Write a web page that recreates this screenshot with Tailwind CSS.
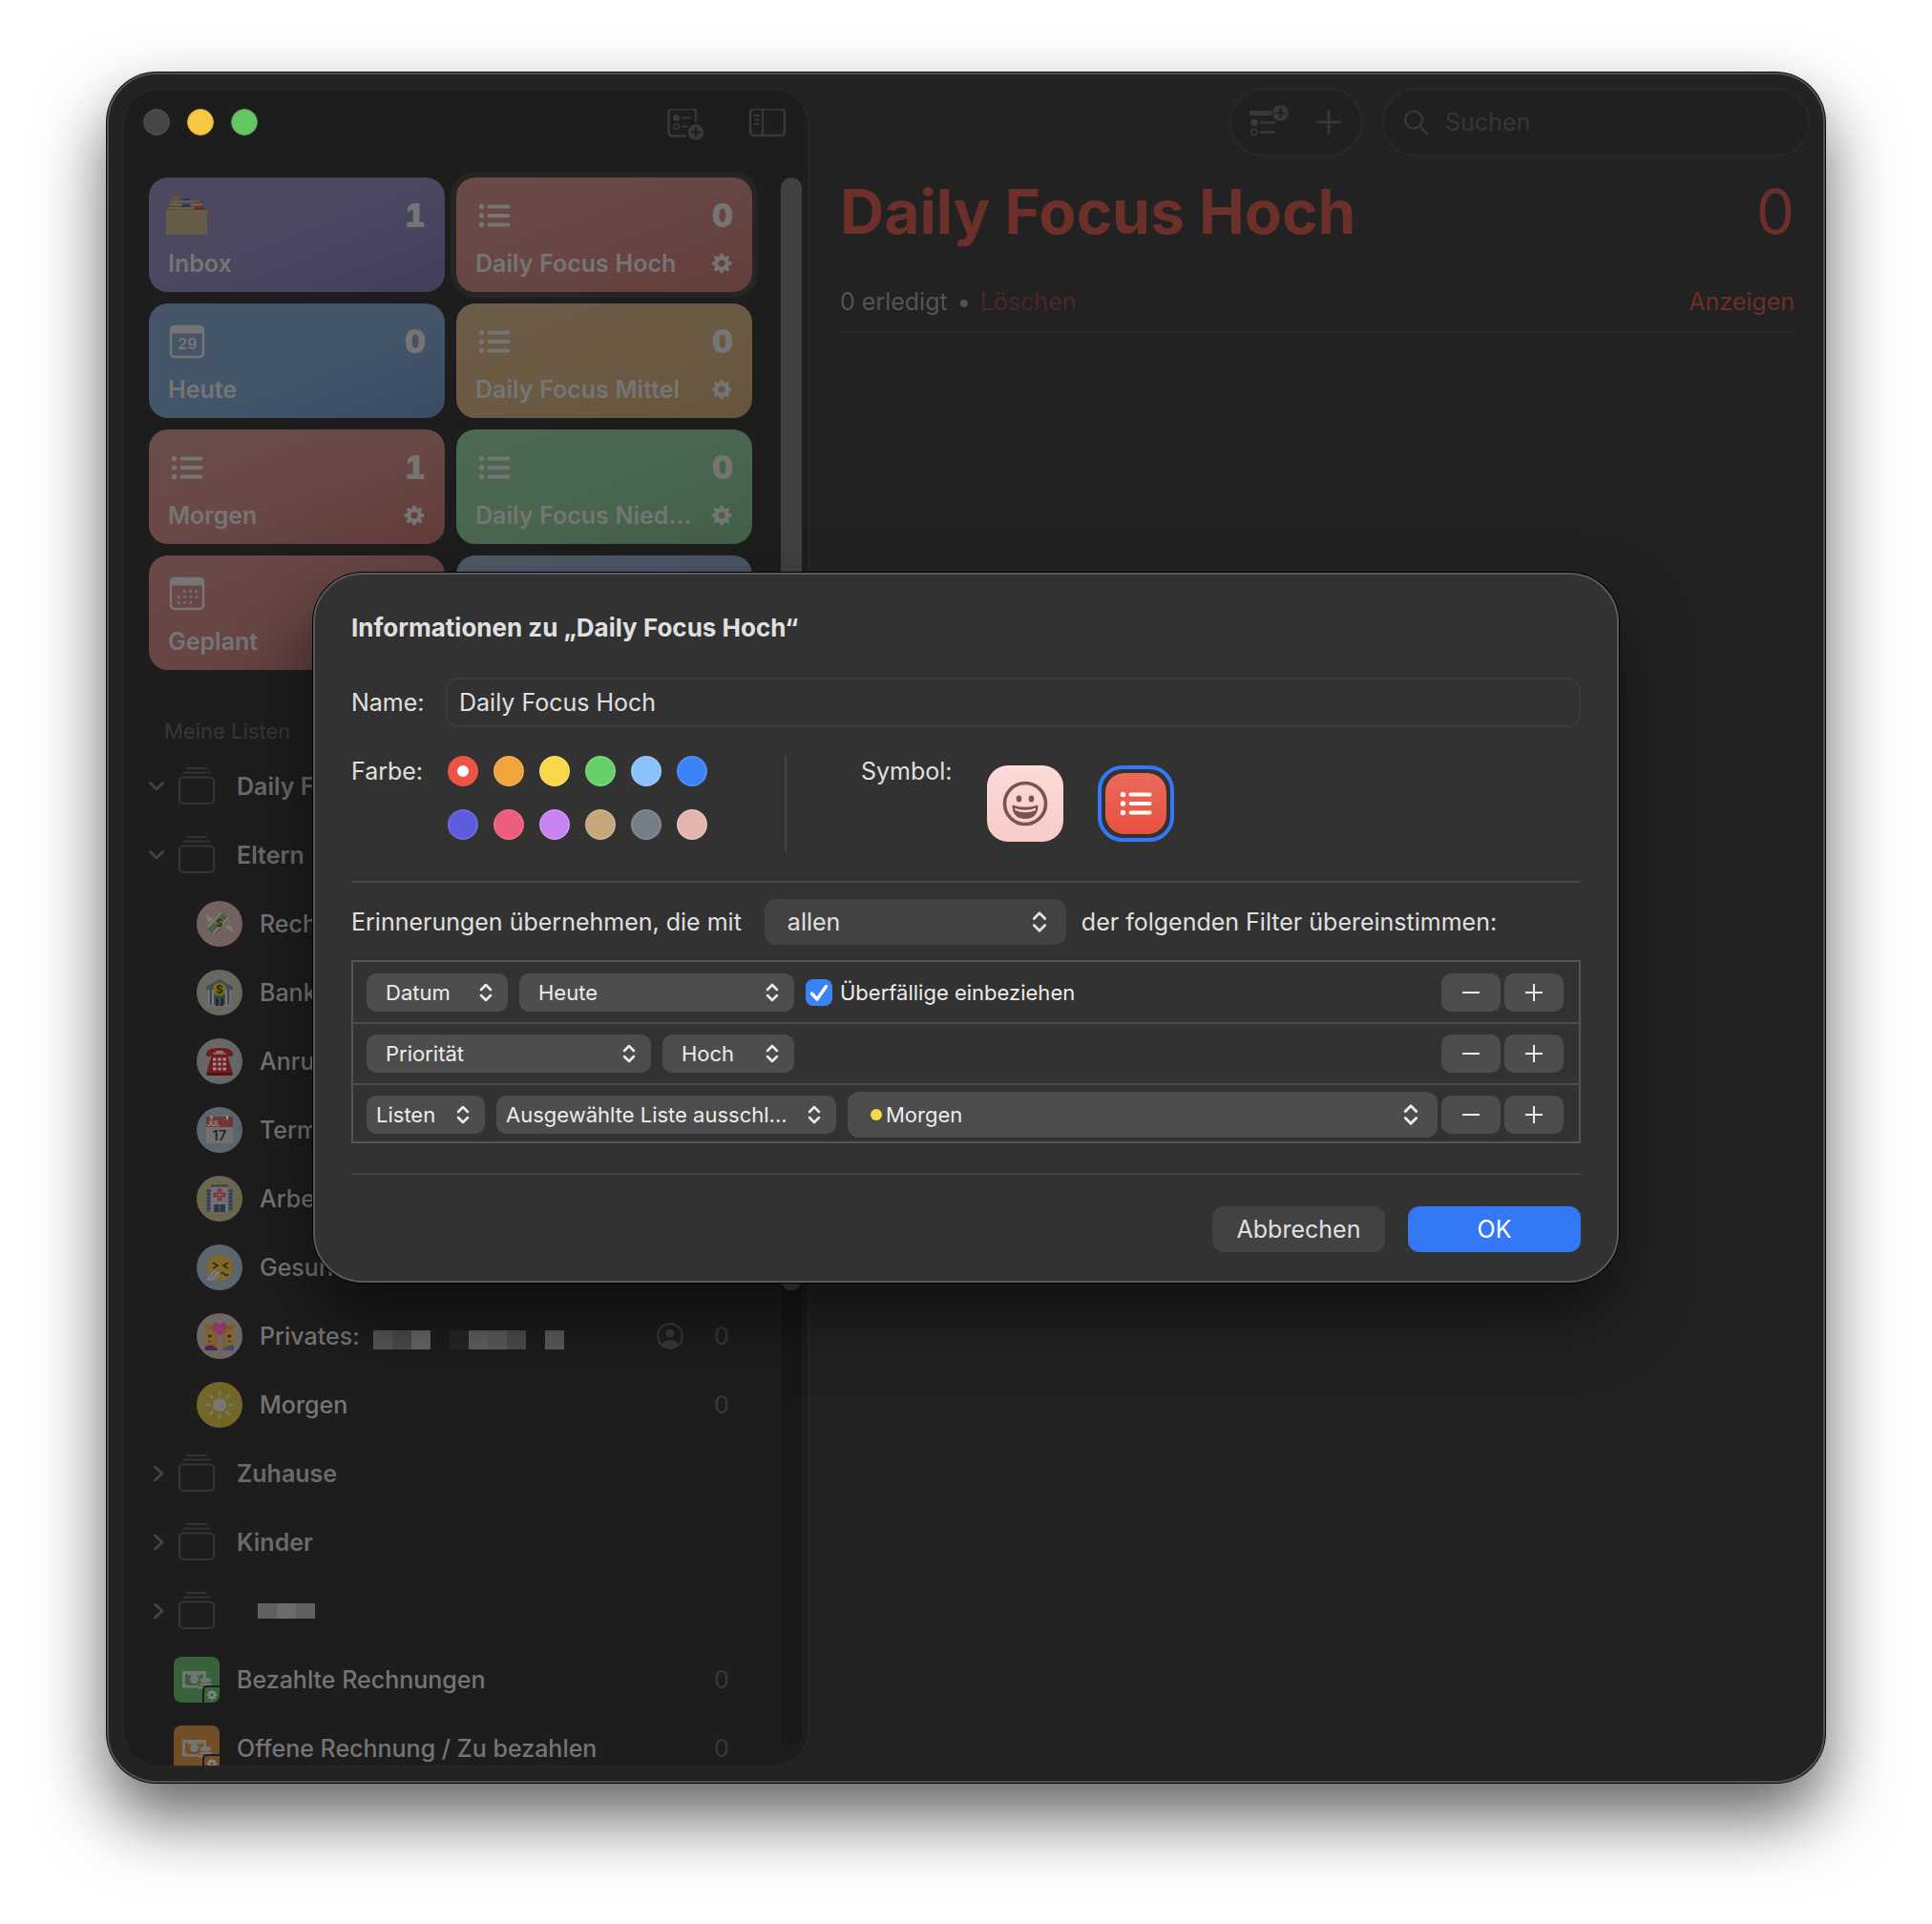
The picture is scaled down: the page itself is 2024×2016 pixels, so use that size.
<!DOCTYPE html>
<html lang="de">
<head>
  <meta charset="UTF-8">
  <title>Erinnerungen</title>
  <meta name="viewport" content="width=device-width, initial-scale=1.0">
  <script src="https://cdn.jsdelivr.net/npm/@tailwindcss/browser@4"></script>
</head>
<body class="h-screen bg-white px-28 pt-[76px] pb-[148px] font-['Inter','Liberation_Sans',sans-serif] text-[25px] leading-8 text-[#7b7b7b]">

  <!-- SYMBOLE -->
  <svg class="hidden" aria-hidden="true">
    <symbol id="list" viewBox="0 0 40 40">
      <g fill="currentColor"><circle cx="6.500" cy="10.500" r="2.700"/><circle cx="6.500" cy="20" r="2.700"/><circle cx="6.500" cy="29.500" r="2.700"/></g>
      <path d="M14.500 10.500H34.500M14.500 20H34.500M14.500 29.500H34.500" stroke="currentColor" stroke-width="4" stroke-linecap="round"/>
    </symbol>
    <symbol id="gear" viewBox="0 0 24 24">
      <circle cx="12" cy="12" r="5.800" fill="none" stroke="currentColor" stroke-width="4.400"/>
      <g stroke="currentColor" stroke-width="3.600" stroke-linecap="round"><path d="M12 4V3.200M12 20V20.800M4 12H3.200M20 12H20.800M6.300 6.300 5.800 5.800M17.700 6.300 18.200 5.800M6.300 17.700 5.800 18.200M17.700 17.700 18.200 18.200"/></g>
    </symbol>
    <symbol id="updown" viewBox="0 0 14 20">
      <path d="M2 7 7 2 12 7M2 13 7 18 12 13" fill="none" stroke="currentColor" stroke-width="2.500" stroke-linecap="round" stroke-linejoin="round"/>
    </symbol>
    <symbol id="stack" viewBox="0 0 48 48">
      <path d="M14 5H34M10.500 9.500H37.500" stroke="currentColor" stroke-width="2.200" stroke-linecap="round"/>
      <rect x="6" y="14.500" width="36" height="27.500" rx="4.500" fill="none" stroke="currentColor" stroke-width="2.200"/>
    </symbol>
    <symbol id="down" viewBox="0 0 16 16"><path d="M1.500 4.500 8 11 14.500 4.500" fill="none" stroke="currentColor" stroke-width="2.600" stroke-linecap="round" stroke-linejoin="round"/></symbol>
    <symbol id="right" viewBox="0 0 16 16"><path d="M6.500 1 14 8 6.500 15" fill="none" stroke="currentColor" stroke-width="2.600" stroke-linecap="round" stroke-linejoin="round"/></symbol>
    <symbol id="minus" viewBox="0 0 20 20"><path d="M1 10H19" stroke="currentColor" stroke-width="2"/></symbol>
    <symbol id="plus" viewBox="0 0 20 20"><path d="M1 10H19M10 1V19" stroke="currentColor" stroke-width="2"/></symbol>
    <symbol id="cash" viewBox="0 0 48 48">
      <path d="M9 15H34V22H31V18H30Q28 18 28 19.500H15Q15 18 13 18H12V29Q15 29 15 30H26V32.500H9Z" fill="#747474"/>
      <circle cx="21.500" cy="23.500" r="4.500" fill="#747474"/>
      <ellipse cx="33.500" cy="24.500" rx="6" ry="2.800" fill="#747474"/>
      <path d="M28 29H39M27 32.500H31" stroke="#747474" stroke-width="2.500" stroke-linecap="round"/>
    </symbol>
  </svg>

  <!-- FENSTER -->
  <div class="relative flex h-full rounded-[52px] border-2 border-[#4f504f] bg-[#222222] p-3.5 shadow-[0_0_0_1px_#0c0c0c,0_36px_72px_rgba(0,0,0,0.62)]">

    <!-- SEITENLEISTE -->
    <aside class="flex w-[720px] shrink-0 flex-col overflow-hidden rounded-[38px] border-2 border-[#272727] bg-[#1d1d1d]">
      <div class="flex h-[92px] shrink-0 items-start justify-between pt-5 pr-[22px] pl-5">
        <div class="flex gap-[18px]">
          <button aria-label="Schließen" class="size-7 rounded-full border border-[#525254] bg-[#464648]"></button>
          <button aria-label="Minimieren" class="size-7 rounded-full border border-[#e0a52c] bg-[#f5c944]"></button>
          <button aria-label="Zoomen" class="size-7 rounded-full border border-[#3fae45] bg-[#65c466]"></button>
        </div>
        <div class="flex gap-[46px] text-[#383838]">
          <button aria-label="Neue Liste">
            <svg class="h-9 w-10" viewBox="0 0 40 36" fill="none" stroke="currentColor">
              <path d="M21 28.500H7Q2.500 28.500 2.500 24V4.500Q2.500 0 7 0H26.500Q31 0 31 4.500V13.500" stroke-width="2.600"/>
              <circle cx="10.500" cy="9.500" r="3.600" fill="currentColor" stroke="none"/><circle cx="10.500" cy="18.500" r="2.800" stroke-width="1.500"/>
              <path d="M16 9.500H25.500M16 18.500H22.500" stroke-width="2"/>
              <circle cx="31" cy="24.500" r="8.300" fill="currentColor" stroke="none"/>
              <path d="M31 19.500V29.500M26 24.500H36" stroke="#1d1d1d" stroke-width="2.200"/>
            </svg>
          </button>
          <button aria-label="Seitenleiste ausblenden">
            <svg class="h-9 w-10" viewBox="0 0 40 36" fill="none" stroke="currentColor">
              <rect x="2" y="0" width="36" height="28" rx="4.500" stroke-width="2.600"/>
              <path d="M15 0V28" stroke-width="2.200"/><path d="M6 7H11.500M6 11.500H11.500M6 16H11.500" stroke-width="1.800"/>
            </svg>
          </button>
        </div>
      </div>

      <div class="flex min-h-0 flex-1">
        <div class="min-w-0 flex-1 pr-[30px] pl-[26px]">

          <!-- INTELLIGENTE LISTEN -->
          <div class="grid grid-cols-2 gap-3 text-[#757575] tabular-nums">
            <button class="flex h-[120px] flex-col justify-between rounded-[20px] bg-linear-to-br from-[#4c4960] via-[#4a4860] to-[#413e5b] px-5 pt-5 pb-3.5 text-left font-semibold">
              <span class="flex items-center justify-between">
                <svg class="-ml-1 h-10 w-12" viewBox="0 0 48 40">
                  <path d="M8 4H38L44 15H2Z" fill="#57503f"/><path d="M9 0H15L17 3H8Z" fill="#6d4f33"/><path d="M20 2H26L28 4H19Z" fill="#2f3168"/><path d="M32 4H40L41 6H30Z" fill="#692a2e"/>
                  <path d="M6 5H38M5 8.500H40M4 12H42" stroke="#796f57" stroke-width="1.200"/>
                  <path d="M7 6H15L16 8H5Z" fill="#6d4f33"/><path d="M19 8H27L28 11H18Z" fill="#2f3168"/><path d="M32 10.500H42L43 14H31Z" fill="#692a2e"/>
                  <path d="M2 14H45V41H2Z" fill="#665c48"/>
                </svg>
                <b class="text-[34px]">1</b>
              </span>
              <span>Inbox</span>
            </button>
            <button class="flex h-[120px] flex-col justify-between rounded-[20px] bg-linear-to-br from-[#6a4a47] via-[#684644] to-[#643d3a] px-5 pt-5 pb-3.5 text-left font-semibold shadow-[0_0_0_6px_#252525]">
              <span class="flex items-center justify-between"><svg class="size-10"><use href="#list"/></svg><b class="text-[34px]">0</b></span>
              <span class="flex items-center justify-between">Daily Focus Hoch <svg class="size-6"><use href="#gear"/></svg></span>
            </button>
            <button class="flex h-[120px] flex-col justify-between rounded-[20px] bg-linear-to-br from-[#46566a] via-[#455569] to-[#3b4b66] px-5 pt-5 pb-3.5 text-left font-semibold">
              <span class="flex items-center justify-between">
                <svg class="size-10" viewBox="0 0 40 40">
                  <rect x="3" y="4" width="34" height="32" rx="4" fill="none" stroke="currentColor" stroke-width="2.400"/><path d="M3 4H37V11.500H3Z" fill="currentColor"/>
                  <text x="20" y="27.500" text-anchor="middle" font-size="16" font-weight="600" fill="currentColor">29</text>
                </svg>
                <b class="text-[34px]">0</b>
              </span>
              <span>Heute</span>
            </button>
            <button class="flex h-[120px] flex-col justify-between rounded-[20px] bg-linear-to-br from-[#6b5c47] via-[#6b5a44] to-[#68543c] px-5 pt-5 pb-3.5 text-left font-semibold">
              <span class="flex items-center justify-between"><svg class="size-10"><use href="#list"/></svg><b class="text-[34px]">0</b></span>
              <span class="flex items-center justify-between">Daily Focus Mittel <svg class="size-6"><use href="#gear"/></svg></span>
            </button>
            <button class="flex h-[120px] flex-col justify-between rounded-[20px] bg-linear-to-br from-[#6a4d49] via-[#694845] to-[#633c39] px-5 pt-5 pb-3.5 text-left font-semibold">
              <span class="flex items-center justify-between"><svg class="size-10"><use href="#list"/></svg><b class="text-[34px]">1</b></span>
              <span class="flex items-center justify-between">Morgen <svg class="size-6"><use href="#gear"/></svg></span>
            </button>
            <button class="flex h-[120px] flex-col justify-between rounded-[20px] bg-linear-to-br from-[#4e6951] via-[#4b664e] to-[#445f47] px-5 pt-5 pb-3.5 text-left font-semibold">
              <span class="flex items-center justify-between"><svg class="size-10"><use href="#list"/></svg><b class="text-[34px]">0</b></span>
              <span class="flex items-center justify-between">Daily Focus Nied… <svg class="size-6"><use href="#gear"/></svg></span>
            </button>
            <button class="flex h-[120px] flex-col justify-between rounded-[20px] bg-linear-to-br from-[#6a4a48] via-[#664543] to-[#5c3a38] px-5 pt-5 pb-3.5 text-left font-semibold">
              <svg class="size-10" viewBox="0 0 40 40">
                <rect x="3" y="4" width="34" height="32" rx="4" fill="none" stroke="currentColor" stroke-width="2.400"/><path d="M3 4H37V11.500H3Z" fill="currentColor"/>
                <path d="M16 17.500H31M10 23.500H31M10 29.500H25" stroke="currentColor" stroke-width="2.600" stroke-dasharray="2.600 3.700"/>
              </svg>
              <span>Geplant</span>
            </button>
            <button aria-label="Alle" class="h-[120px] rounded-[20px] bg-linear-to-br from-[#505b66] to-[#435267]"></button>
          </div>

          <!-- MEINE LISTEN -->
          <h2 class="flex h-[86px] items-end pb-1.5 pl-4 text-[22px] text-[#373737]">Meine Listen</h2>
          <ul class="text-[#757575]">
            <li class="flex h-[72px] items-center font-semibold text-[#6a6a6a]">
              <svg class="mr-2.5 size-4 text-[#464646]"><use href="#down"/></svg><svg class="mr-[18px] size-12 text-[#343434]"><use href="#stack"/></svg>Daily F
            </li>
            <li class="flex h-[72px] items-center font-semibold text-[#6a6a6a]">
              <svg class="mr-2.5 size-4 text-[#464646]"><use href="#down"/></svg><svg class="mr-[18px] size-12 text-[#343434]"><use href="#stack"/></svg>Eltern
            </li>
            <li class="flex h-[72px] items-center pl-[50px] font-medium">
              <svg class="mr-[18px] size-12" viewBox="0 0 48 48">
                <circle cx="24" cy="24" r="24" fill="#746261"/>
                <path d="M10 13Q14 18 18 19L14 22Q9 20 10 13ZM38 34Q34 29 30 28L33 25Q39 27 38 34Z" fill="#7d7d78"/>
                <path d="M9 29 25 11 31 16Q35 17 37 16L22 33 17 35Q14 31 9 29Z" fill="#4f5b4b"/><path d="M11 28 26 12M17 34 34 17" stroke="#798272" stroke-width="2"/>
                <path d="M17 21 22 17 30 25 25 29Z" fill="#78713d"/><text x="23.500" y="27" text-anchor="middle" font-size="11" font-weight="700" fill="#2d2c1d">$</text>
              </svg>Rech
            </li>
            <li class="flex h-[72px] items-center pl-[50px] font-medium">
              <svg class="mr-[18px] size-12" viewBox="0 0 48 48">
                <circle cx="24" cy="24" r="24" fill="#6a6660"/>
                <path d="M10 18 24 10 38 18V21H10Z" fill="#3c4d57"/><path d="M11 21H37V37H11Z" fill="#34434c"/>
                <path d="M12.500 21V37M17 21V37M31 21V37M35.500 21V37" stroke="#75797c" stroke-width="2.400"/><path d="M10 37.500H38" stroke="#6d7174" stroke-width="2"/>
                <path d="M20 30H28V38H20Z" fill="#202b38"/><path d="M24 30V38" stroke="#716425" stroke-width="1.200"/>
                <circle cx="24" cy="20.500" r="7" fill="#7b6c20"/><text x="24" y="25" text-anchor="middle" font-size="12" font-weight="700" fill="#2f2a10">$</text>
              </svg>Bank
            </li>
            <li class="flex h-[72px] items-center pl-[50px] font-medium">
              <svg class="mr-[18px] size-12" viewBox="0 0 48 48">
                <circle cx="24" cy="24" r="24" fill="#656769"/>
                <path d="M10 17Q10 10 24 10T38 17Q38 19 35 19L31 18V15H17V18L13 19Q10 19 10 17Z" fill="#76181a"/>
                <path d="M16 17H32L36 30 38 38H10L12 30Z" fill="#701b1d"/><path d="M20 13H28V15.500H20Z" fill="#8b7877"/><path d="M11 36H37V39H11Z" fill="#541012"/>
                <path d="M17 22H31M17 27H31M17 32H31" stroke="#9b9290" stroke-width="3.200" stroke-dasharray="3.500 1.750"/>
              </svg>Anru
            </li>
            <li class="flex h-[72px] items-center pl-[50px] font-medium">
              <svg class="mr-[18px] size-12" viewBox="0 0 48 48">
                <circle cx="24" cy="24" r="24" fill="#5d666f"/>
                <rect x="10" y="10" width="28" height="28" rx="1.500" fill="#73706f"/><path d="M10 10H38V21H10Z" fill="#703734"/>
                <text x="11" y="19.500" font-size="7" font-weight="700" fill="#979090">JUL</text><path d="M15.500 9V13M32 9V13" stroke="#8d9499" stroke-width="2"/>
                <text x="24" y="35" text-anchor="middle" font-size="15" fill="#202020">17</text>
              </svg>Term
            </li>
            <li class="flex h-[72px] items-center pl-[50px] font-medium">
              <svg class="mr-[18px] size-12" viewBox="0 0 48 48">
                <circle cx="24" cy="24" r="24" fill="#6b674f"/>
                <path d="M10 15H38V38H10Z" fill="#55565a"/><path d="M15 11H33V38H15Z" fill="#727179"/><path d="M15 10.500H33M10 15.500H15M33 15.500H38" stroke="#353c45" stroke-width="1.800"/>
                <path d="M12.500 18V36M35.500 18V36" stroke="#263e50" stroke-width="2.600" stroke-dasharray="2.500 1.200"/><path d="M18 30H30V38H18Z" fill="#2a3846"/><path d="M24 31V38" stroke="#566577"/>
                <path d="M22.500 14.500H25.500V18.500H29.500V21.500H25.500V25.500H22.500V21.500H18.500V18.500H22.500Z" fill="#786467" stroke="#87282b" stroke-width="1.600"/>
              </svg>Arbe
            </li>
            <li class="flex h-[72px] items-center pl-[50px] font-medium">
              <svg class="mr-[18px] size-12" viewBox="0 0 48 48">
                <circle cx="24" cy="24" r="24" fill="#5d666e"/>
                <circle cx="24.500" cy="24" r="13.500" fill="#80682a"/><path d="M17 19 22 22 17 25M33 19 28 22 33 25M25 31Q27 28 29 31T33 31" fill="none" stroke="#352914" stroke-width="1.600"/>
                <path d="M10 37Q15 32 18 27L25 29Q23 36 16 38Z" fill="#7d7d7b"/><path d="M14 36 20 29M18 36 23 31" stroke="#545452"/>
              </svg>Gesund
            </li>
            <li class="flex h-[72px] items-center pl-[50px] font-medium">
              <svg class="mr-[18px] size-12 shrink-0" viewBox="0 0 48 48">
                <circle cx="24" cy="24" r="24" fill="#706664"/>
                <path d="M9 12Q20 10 21 20T22 38H9ZM39 12Q29 11 28 22L27 38H39Z" fill="#7c5d1f"/><path d="M9 17Q17 15 19 24T12 33L9 32ZM39 17Q30 17 29 26T36 34L39 32Z" fill="#806437"/>
                <path d="M9 35 16 33 22 38V39H9Z" fill="#462850"/><path d="M39 34 33 34 27 39H39Z" fill="#31517a"/>
                <path d="M12 24H15.500M32.500 24H36" stroke="#2c2115" stroke-width="2.400"/><path d="M12 29.500H15.500M33 29.500H36.500" stroke="#6d2f31" stroke-width="1.400"/>
                <path d="M24 24Q15 17 17 12Q20 7 24 12Q28 7 31 12Q33 17 24 24Z" fill="#893968"/>
              </svg>
              <span>Privates:</span>
              <span class="mt-2 ml-3.5 flex" aria-hidden="true">
                <i class="size-5 bg-[#575757]"></i><i class="size-5 bg-[#4b4b4b]"></i><i class="size-5 bg-[#676767]"></i><i class="size-5"></i><i class="size-5 bg-[#262626]"></i><i class="size-5 bg-[#616161]"></i><i class="size-5 bg-[#5c5c5c]"></i><i class="size-5 bg-[#4d4d4d]"></i><i class="size-5"></i><i class="size-5 bg-[#5c5c5c]"></i>
              </span>
              <svg class="mr-8 ml-auto size-7 text-[#393939]" viewBox="0 0 28 28" fill="none" stroke="currentColor"><circle cx="14" cy="14" r="12.800" stroke-width="2.200"/><circle cx="14" cy="11" r="4.500" fill="currentColor" stroke="none"/><path d="M5 23Q8 18 14 18T23 23Q19 27 14 27T5 23Z" fill="currentColor" stroke="none"/></svg>
              <span class="w-10 font-normal text-[#393939]">0</span>
            </li>
            <li class="flex h-[72px] items-center pl-[50px] font-medium">
              <svg class="mr-[18px] size-12" viewBox="0 0 48 48">
                <circle cx="24" cy="24" r="24" fill="#736629"/><circle cx="24" cy="24" r="7" fill="#777"/>
                <path d="M24 10V13.500M24 34.500V38M10 24H13.500M34.500 24H38M14 14 16.500 16.500M31.500 31.500 34 34M34 14 31.500 16.500M14 34 16.500 31.500" stroke="#777" stroke-width="2.400" stroke-linecap="round"/>
              </svg>Morgen
              <span class="ml-auto w-10 font-normal text-[#393939]">0</span>
            </li>
            <li class="flex h-[72px] items-center font-semibold text-[#6a6a6a]">
              <svg class="mr-2.5 size-4 text-[#464646]"><use href="#right"/></svg><svg class="mr-[18px] size-12 text-[#343434]"><use href="#stack"/></svg>Zuhause
            </li>
            <li class="flex h-[72px] items-center font-semibold text-[#6a6a6a]">
              <svg class="mr-2.5 size-4 text-[#464646]"><use href="#right"/></svg><svg class="mr-[18px] size-12 text-[#343434]"><use href="#stack"/></svg>Kinder
            </li>
            <li class="flex h-[72px] items-center">
              <svg class="mr-2.5 size-4 text-[#464646]"><use href="#right"/></svg><svg class="mr-10 size-12 text-[#343434]"><use href="#stack"/></svg>
              <i class="h-4 w-5 bg-[#606060]"></i><i class="h-4 w-5 bg-[#6c6c6c]"></i><i class="h-4 w-5 bg-[#606060]"></i>
            </li>
            <li class="flex h-[72px] items-center pl-[26px] font-medium">
              <svg class="mr-[18px] size-12" viewBox="0 0 48 48">
                <rect width="48" height="48" rx="8" fill="#386239"/><use href="#cash" width="48" height="48"/>
                <path d="M31 48V35Q31 31 35 31H48" fill="none" stroke="#1d1d1d" stroke-width="2"/><use href="#gear" x="34" y="34" width="12" height="12" color="#848484"/>
              </svg>Bezahlte Rechnungen
              <span class="ml-auto w-10 font-normal text-[#393939]">0</span>
            </li>
            <li class="flex h-[72px] items-center pl-[26px] font-medium">
              <svg class="mr-[18px] size-12" viewBox="0 0 48 48">
                <rect width="48" height="48" rx="8" fill="#724e26"/><use href="#cash" width="48" height="48"/>
                <path d="M31 48V35Q31 31 35 31H48" fill="none" stroke="#1d1d1d" stroke-width="2"/><use href="#gear" x="34" y="34" width="12" height="12" color="#848484"/>
              </svg>Offene Rechnung / Zu bezahlen
              <span class="ml-auto w-10 font-normal text-[#393939]">0</span>
            </li>
          </ul>
        </div>

        <div class="mr-1.5 mb-[22px] w-[22px] rounded-full bg-[#181818]">
          <div class="h-[71%] rounded-full bg-[#414141]"></div>
        </div>
      </div>
    </aside>

    <!-- INHALT -->
    <main class="min-w-0 flex-1">
      <div class="flex justify-end gap-5">
        <div class="flex h-[72px] items-center gap-[26px] rounded-full border-2 border-[#292929] bg-[#202020] pr-5 pl-[18px] text-[#393939]">
          <button aria-label="Neuer Abschnitt">
            <svg class="h-9 w-11" viewBox="0 0 44 36" fill="none" stroke="currentColor">
              <path d="M1 8.500H24" stroke-width="5"/><circle cx="6" cy="18.500" r="3.800" fill="currentColor" stroke="none"/><path d="M12.500 18.500H28.500M12.500 28.500H28.500" stroke-width="2.600"/>
              <circle cx="6" cy="28.500" r="3" stroke-width="1.500"/><circle cx="33.500" cy="8.500" r="8.300" fill="currentColor" stroke="none"/><path d="M33.500 3.500V13.500M28.500 8.500H38.500" stroke="#202020" stroke-width="2.200"/>
            </svg>
          </button>
          <button aria-label="Neue Erinnerung"><svg class="size-7" viewBox="0 0 28 28"><path d="M1 14H27M14 1V27" stroke="currentColor" stroke-width="2.600"/></svg></button>
        </div>
        <label class="flex h-[72px] w-[448px] items-center gap-4 rounded-full border-2 border-[#292929] bg-[#202020] px-5 text-[#383838]">
          <svg class="size-7" viewBox="0 0 28 28" fill="none" stroke="currentColor"><circle cx="11" cy="11.500" r="9" stroke-width="2.400"/><path d="M17.500 18.500 25 26" stroke-width="2.800" stroke-linecap="round"/></svg>
          <input type="search" placeholder="Suchen" aria-label="Suchen" class="min-w-0 flex-1 bg-transparent outline-none placeholder:text-[#363636]">
        </label>
      </div>
      <div class="pr-4 pl-8">
        <div class="flex h-[116px] items-center justify-between text-[64px] text-[#6d2f29]">
          <h1 class="font-bold">Daily Focus Hoch</h1>
          <span>0</span>
        </div>
        <div class="flex h-[69px] items-center border-b-2 border-[#2a2a2a] pt-1">
          <span class="text-[#545454]">0 erledigt</span>
          <span class="mx-2.5 text-[#545454]">•</span>
          <button class="text-[#48292a]">Löschen</button>
          <button class="ml-auto text-[#6d2f29]">Anzeigen</button>
        </div>
      </div>
    </main>

    <!-- DIALOG -->
    <form role="dialog" aria-labelledby="dialog-title" class="absolute inset-x-0 top-[522px] mx-auto w-[1368px] max-w-full rounded-[52px] border-2 border-[#5a5a5a] bg-[#323232] px-[38px] pt-10 pb-[30px] text-[#e0e0e0] shadow-[0_0_0_1px_#000,0_36px_72px_rgba(0,0,0,0.5)]">
      <h2 id="dialog-title" class="text-[26px] leading-8 font-bold">Informationen zu „Daily Focus Hoch“</h2>

      <div class="mt-9 flex items-center gap-6">
        <label for="name" class="w-[75px] text-right">Name:</label>
        <input id="name" type="text" value="Daily Focus Hoch" class="h-[52px] min-w-0 flex-1 rounded-xl border-2 border-[#3b3b3b] bg-[#323232] px-3 outline-none">
      </div>

      <div class="mt-[30px] flex">
        <span class="w-[75px] text-right">Farbe:</span>
        <div class="ml-[26px] grid grid-cols-6 content-start gap-x-4 gap-y-6">
          <input type="radio" name="farbe" aria-label="Rot" checked class="size-8 appearance-none rounded-full border-10 border-[#ec5545] bg-white">
          <input type="radio" name="farbe" aria-label="Orange" class="size-8 appearance-none rounded-full border-2 border-[#f2ab4d] bg-[#f1a33c]">
          <input type="radio" name="farbe" aria-label="Gelb" class="size-8 appearance-none rounded-full border-2 border-[#f8da5f] bg-[#f8d74a]">
          <input type="radio" name="farbe" aria-label="Grün" class="size-8 appearance-none rounded-full border-2 border-[#76d576] bg-[#67cf69]">
          <input type="radio" name="farbe" aria-label="Hellblau" class="size-8 appearance-none rounded-full border-2 border-[#95c7fa] bg-[#89c1fa]">
          <input type="radio" name="farbe" aria-label="Blau" class="size-8 appearance-none rounded-full border-2 border-[#508ff8] bg-[#3b82f7]">
          <input type="radio" name="farbe" aria-label="Indigo" class="size-8 appearance-none rounded-full border-2 border-[#6e6be0] bg-[#5d5cdd]">
          <input type="radio" name="farbe" aria-label="Pink" class="size-8 appearance-none rounded-full border-2 border-[#ee6d89] bg-[#ec5d7b]">
          <input type="radio" name="farbe" aria-label="Violett" class="size-8 appearance-none rounded-full border-2 border-[#cf90f3] bg-[#c983f0]">
          <input type="radio" name="farbe" aria-label="Braun" class="size-8 appearance-none rounded-full border-2 border-[#cab187] bg-[#c4a77a]">
          <input type="radio" name="farbe" aria-label="Grau" class="size-8 appearance-none rounded-full border-2 border-[#818a92] bg-[#747f87]">
          <input type="radio" name="farbe" aria-label="Rosa" class="size-8 appearance-none rounded-full border-2 border-[#e7bfba] bg-[#e3b5af]">
        </div>
        <div class="ml-[81px] h-[100px] border-l-2 border-[#464646]"></div>
        <span class="ml-[78px]">Symbol:</span>
        <div class="mt-2.5 ml-9 flex gap-9">
          <button type="button" aria-label="Emoji" class="flex size-20 items-center justify-center rounded-[22px] bg-linear-to-b from-[#fadcd9] to-[#f8cbc7] text-[#7b534c]">
            <svg class="size-12" viewBox="0 0 48 48"><circle cx="24" cy="24" r="21.500" fill="none" stroke="currentColor" stroke-width="3.600"/><ellipse cx="17.500" cy="19" rx="2.800" ry="3.400" fill="currentColor"/><ellipse cx="30.500" cy="19" rx="2.800" ry="3.400" fill="currentColor"/><path d="M10.500 25.500Q24 30 37.500 25.500Q37.500 40 24 40T10.500 25.500Z" fill="currentColor"/><path d="M13 28.800Q24 32.500 35 28.800V31Q24 35.500 13.500 31Z" fill="#f9d3cf"/></svg>
          </button>
          <button type="button" aria-label="Liste" class="size-20 rounded-[26px] border-4 border-[#3478f6] p-1">
            <span class="flex size-16 items-center justify-center rounded-[20px] bg-linear-to-b from-[#ec695b] to-[#e8503f] text-white"><svg class="size-10"><use href="#list"/></svg></span>
          </button>
        </div>
      </div>

      <hr class="mt-[31px] border-t-2 border-[#464646]">

      <div class="mt-[17px] flex items-center">
        <label for="modus">Erinnerungen übernehmen, die mit</label>
        <span class="ml-6 grid w-[316px] items-center">
          <select id="modus" class="col-start-1 row-start-1 h-12 appearance-none rounded-xl bg-[#424242] pl-6"><option>allen</option><option>einem</option></select>
          <svg class="pointer-events-none col-start-1 row-start-1 mr-5 ml-auto h-6 w-4"><use href="#updown"/></svg>
        </span>
        <span class="ml-4">der folgenden Filter übereinstimmen:</span>
      </div>

      <!-- FILTER -->
      <div class="mt-4 divide-y-2 divide-[#4b4b4b] border-2 border-[#555555] text-[22px] text-[#ececec]">
        <div class="flex h-[65px] items-center gap-3 px-3.5 pr-4">
          <span class="grid w-[148px] items-center">
            <select aria-label="Filterart" class="col-start-1 row-start-1 h-10 appearance-none rounded-[10px] bg-[#4d4d4d] pl-5"><option>Datum</option></select>
            <svg class="pointer-events-none col-start-1 row-start-1 mr-4 ml-auto h-5 w-3.5"><use href="#updown"/></svg>
          </span>
          <span class="grid w-[288px] items-center">
            <select aria-label="Datum" class="col-start-1 row-start-1 h-10 appearance-none rounded-[10px] bg-[#4d4d4d] pl-5"><option>Heute</option></select>
            <svg class="pointer-events-none col-start-1 row-start-1 mr-4 ml-auto h-5 w-3.5"><use href="#updown"/></svg>
          </span>
          <label class="flex items-center gap-2">
            <span class="grid">
              <input type="checkbox" checked class="col-start-1 row-start-1 size-7 appearance-none rounded-lg bg-[#3b82f7]">
              <svg class="pointer-events-none col-start-1 row-start-1 size-7" viewBox="0 0 28 28"><path d="M6.500 15 12 21 21.500 7.500" fill="none" stroke="#fff" stroke-width="3.400" stroke-linecap="round" stroke-linejoin="round"/></svg>
            </span>
            Überfällige einbeziehen
          </label>
          <span class="ml-auto flex gap-1">
            <button type="button" aria-label="Filter entfernen" class="flex h-10 w-[62px] items-center justify-center rounded-[10px] bg-[#4d4d4d]"><svg class="size-5"><use href="#minus"/></svg></button>
            <button type="button" aria-label="Filter hinzufügen" class="flex h-10 w-[62px] items-center justify-center rounded-[10px] bg-[#4d4d4d]"><svg class="size-5"><use href="#plus"/></svg></button>
          </span>
        </div>
        <div class="flex h-16 items-center gap-3 px-3.5 pr-4">
          <span class="grid w-[298px] items-center">
            <select aria-label="Filterart" class="col-start-1 row-start-1 h-10 appearance-none rounded-[10px] bg-[#4d4d4d] pl-5"><option>Priorität</option></select>
            <svg class="pointer-events-none col-start-1 row-start-1 mr-4 ml-auto h-5 w-3.5"><use href="#updown"/></svg>
          </span>
          <span class="grid w-[138px] items-center">
            <select aria-label="Priorität" class="col-start-1 row-start-1 h-10 appearance-none rounded-[10px] bg-[#4d4d4d] pl-5"><option>Hoch</option></select>
            <svg class="pointer-events-none col-start-1 row-start-1 mr-4 ml-auto h-5 w-3.5"><use href="#updown"/></svg>
          </span>
          <span class="ml-auto flex gap-1">
            <button type="button" aria-label="Filter entfernen" class="flex h-10 w-[62px] items-center justify-center rounded-[10px] bg-[#4d4d4d]"><svg class="size-5"><use href="#minus"/></svg></button>
            <button type="button" aria-label="Filter hinzufügen" class="flex h-10 w-[62px] items-center justify-center rounded-[10px] bg-[#4d4d4d]"><svg class="size-5"><use href="#plus"/></svg></button>
          </span>
        </div>
        <div class="flex h-[59px] items-center gap-3 px-3.5 pt-0.5 pr-4">
          <span class="grid w-[124px] items-center">
            <select aria-label="Filterart" class="col-start-1 row-start-1 h-10 appearance-none rounded-[10px] bg-[#4d4d4d] pl-2.5"><option>Listen</option></select>
            <svg class="pointer-events-none col-start-1 row-start-1 mr-4 ml-auto h-5 w-3.5"><use href="#updown"/></svg>
          </span>
          <span class="grid w-[356px] items-center">
            <select aria-label="Bedingung" class="col-start-1 row-start-1 h-10 appearance-none rounded-[10px] bg-[#4d4d4d] pl-2.5"><option>Ausgewählte Liste ausschl...</option></select>
            <svg class="pointer-events-none col-start-1 row-start-1 mr-4 ml-auto h-5 w-3.5"><use href="#updown"/></svg>
          </span>
          <span class="flex min-w-0 flex-1 gap-1">
            <span class="grid flex-1 items-center">
              <select aria-label="Liste" class="col-start-1 row-start-1 h-12 appearance-none rounded-xl bg-[#4d4d4d] pl-10"><option>Morgen</option></select>
              <i class="pointer-events-none col-start-1 row-start-1 ml-6 size-3 rounded-full bg-[#f8d74a]"></i>
              <svg class="pointer-events-none col-start-1 row-start-1 mr-5 ml-auto h-6 w-4"><use href="#updown"/></svg>
            </span>
            <span class="flex items-center gap-1">
              <button type="button" aria-label="Filter entfernen" class="flex h-10 w-[62px] items-center justify-center rounded-[10px] bg-[#4d4d4d]"><svg class="size-5"><use href="#minus"/></svg></button>
              <button type="button" aria-label="Filter hinzufügen" class="flex h-10 w-[62px] items-center justify-center rounded-[10px] bg-[#4d4d4d]"><svg class="size-5"><use href="#plus"/></svg></button>
            </span>
          </span>
        </div>
      </div>

      <hr class="mt-[31px] border-t-2 border-[#464646]">

      <div class="mt-[33px] flex justify-end gap-6">
        <button type="button" class="h-12 w-[181px] rounded-xl bg-[#424242]">Abbrechen</button>
        <button type="submit" class="h-12 w-[181px] rounded-xl bg-[#3478f6] text-white">OK</button>
      </div>
    </form>
  </div>
</body>
</html>
